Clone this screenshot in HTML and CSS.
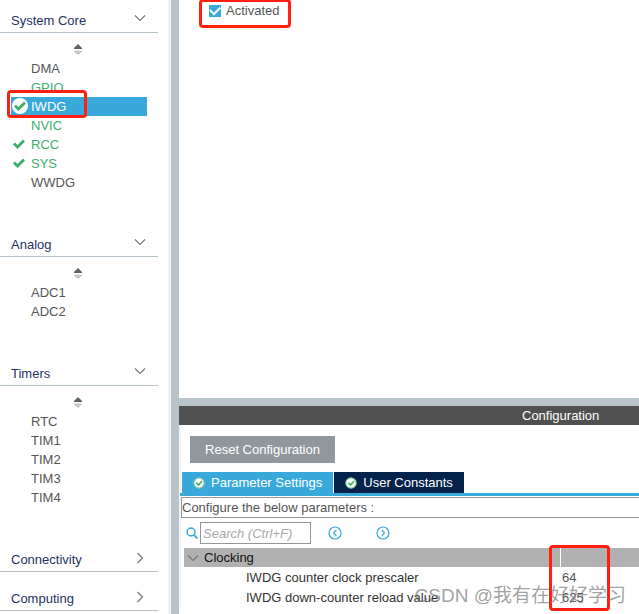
FILE: index.html
```html
<!DOCTYPE html>
<html lang="en">
<head>
<meta charset="utf-8">
<title>IWDG Mode and Configuration</title>
<link rel="stylesheet" href="styles.css">
</head>
<body>
<svg class="defs" aria-hidden="true">
  <symbol id="down" viewBox="0 0 12 8"><path d="M1 1.5 6 6.5 11 1.5" fill="none" stroke="#777" stroke-width="1.2"/></symbol>
  <symbol id="right" viewBox="0 0 8 12"><path d="M1.5 1 6.5 6 1.5 11" fill="none" stroke="#777" stroke-width="1.2"/></symbol>
  <symbol id="sort" viewBox="0 0 8 11"><path d="M4 0 8 4v1H0V4z" fill="#606060"/><path d="M0 6.5h8v1L4 11 0 7.500z" fill="#c8c8c8"/></symbol>
  <symbol id="tick" viewBox="0 0 14 12"><path d="M2 5.500 5.500 9 12 2.500" fill="none" stroke="#3fae6c" stroke-width="2.800"/></symbol>
  <symbol id="ok" viewBox="0 0 12 12"><circle cx="6" cy="6" r="5.200" fill="#fff" stroke="#7cc79a" stroke-width="1.200"/><path d="M3.300 5.700 5.500 8 9 4.200" fill="none" stroke="#3fae6c" stroke-width="1.600"/></symbol>
</svg>
<div class="app">
  <nav class="sidebar">
    <section>
      <button class="head first">System Core<svg class="down"><use href="#down"/></svg></button>
      <div class="sort"><svg><use href="#sort"/></svg></div>
      <ul>
        <li>DMA</li>
        <li class="green">GPIO</li>
        <li class="selected"><span class="disc"><svg class="tick"><use href="#tick"/></svg></span>IWDG<span class="mark mark-item"></span></li>
        <li class="green">NVIC</li>
        <li class="green"><svg class="tick"><use href="#tick"/></svg>RCC</li>
        <li class="green"><svg class="tick"><use href="#tick"/></svg>SYS</li>
        <li>WWDG</li>
      </ul>
    </section>
    <section>
      <button class="head">Analog<svg class="down"><use href="#down"/></svg></button>
      <div class="sort"><svg><use href="#sort"/></svg></div>
      <ul><li>ADC1</li><li>ADC2</li></ul>
    </section>
    <section>
      <button class="head">Timers<svg class="down"><use href="#down"/></svg></button>
      <div class="sort"><svg><use href="#sort"/></svg></div>
      <ul><li>RTC</li><li>TIM1</li><li>TIM2</li><li>TIM3</li><li>TIM4</li></ul>
    </section>
    <section><button class="head">Connectivity<svg class="right"><use href="#right"/></svg></button></section>
    <section><button class="head">Computing<svg class="right"><use href="#right"/></svg></button></section>
  </nav>
  <main>
    <div class="mode">
      <label><input type="checkbox" checked>Activated<span class="mark mark-mode"></span></label>
    </div>
    <h2>Configuration</h2>
    <div class="config">
      <button class="reset">Reset Configuration</button>
      <div class="tabs">
        <button class="tab active"><svg><use href="#ok"/></svg>Parameter Settings</button>
        <button class="tab"><svg><use href="#ok"/></svg>User Constants</button>
      </div>
      <p class="hint">Configure the below parameters :</p>
      <div class="search">
        <label for="q" aria-label="Search"><svg class="glass" viewBox="0 0 12 12"><circle cx="5" cy="5" r="4" fill="none" stroke="#39a9dc" stroke-width="1.500"/><path d="m8 8 3.500 3.500" stroke="#39a9dc" stroke-width="1.800"/></svg></label>
        <input id="q" type="text" placeholder="Search (Ctrl+F)">
        <button class="step" aria-label="Previous"><svg viewBox="0 0 14 14"><circle cx="7" cy="7" r="6"/><path d="M8.300 4 5.500 7l2.800 3"/></svg></button>
        <button class="step" aria-label="Next"><svg viewBox="0 0 14 14"><circle cx="7" cy="7" r="6"/><path d="M5.700 4 8.500 7l-2.800 3"/></svg></button>
      </div>
      <div class="params">
        <table>
          <thead><tr><th><svg class="down"><use href="#down"/></svg>Clocking</th><th></th></tr></thead>
          <tbody>
            <tr><td>IWDG counter clock prescaler</td><td>64</td></tr>
            <tr><td>IWDG down-counter reload value</td><td>625</td></tr>
          </tbody>
        </table>
        <span class="mark mark-values"></span>
      </div>
    </div>
  </main>
  <div class="watermark">CSDN @我有在好好学习</div>
</div>
</body>
</html>
```

FILE: styles.css
```css
* { box-sizing: border-box; }
body {
  margin: 0;
  background: #fff;
  color: #555;
  font: 13px/19px "Liberation Sans", "Noto Sans CJK SC", sans-serif;
}
button, input { font: inherit; border: 0; margin: 0; padding: 0; background: none; }
svg { display: block; flex: none; }
.defs { position: absolute; width: 0; height: 0; }
.app {
  position: relative;
  display: grid;
  grid-template-columns: 179px 1fr;
  min-height: 100vh;
  overflow: hidden;
}

.sidebar {
  border-right: 8px solid #b8c4ca;
  box-shadow: inset -3px 0 #f0f0f0;
  padding-right: 13px;
}
.head {
  display: flex;
  align-items: flex-end;
  justify-content: space-between;
  width: 100%;
  height: 39px;
  padding: 0 12px 2px 11px;
  border-bottom: 1px solid #b4c1c8;
  color: #26335f;
}
.head.first { height: 33px; }
.down { width: 12px; height: 8px; }
.right { width: 8px; height: 12px; }
.head .down { margin-bottom: 8px; }
.head .right { margin: 0 2px 5px 0; }
.sort { height: 26px; padding: 11px 0 0 74px; }
.sort svg { width: 8px; height: 11px; }
ul { list-style: none; margin: 0; padding: 0 11px 26px 11px; }
li {
  position: relative;
  height: 19px;
  padding-left: 20px;
}
.green { color: #3fae6c; }
.tick { width: 14px; height: 12px; }
li > .tick { position: absolute; left: 1px; top: 3px; }
.selected { background: #39a9dc; color: #fff; }
.disc {
  position: absolute;
  left: 1px;
  top: 1px;
  display: grid;
  place-items: center;
  width: 16px;
  height: 16px;
  border-radius: 50%;
  background: #fff;
}
.mark {
  position: absolute;
  border: 3px solid #ff1e0f;
  border-radius: 4px;
  pointer-events: none;
}
.mark-item { left: -4px; top: -7px; width: 80px; height: 28px; z-index: 1; }

main { display: flex; flex-direction: column; min-width: 0; }
.mode { display: flex; align-items: flex-start; height: 406px; padding: 1px 0 0 30px; border-bottom: 8px solid #b8c4ca; }
.mode label { position: relative; display: flex; align-items: center; gap: 5px; }
.mode input {
  appearance: none;
  width: 12px;
  height: 12px;
  background: #39a9dc;
  display: grid;
  place-items: center;
}
.mode input::after {
  content: "";
  width: 8px;
  height: 5px;
  border: solid #fff;
  border-width: 0 0 2px 2px;
  transform: translateY(-1px) rotate(-45deg);
}
.mark-mode { left: -10px; top: -2px; width: 92px; height: 29px; }
h2 {
  margin: 0;
  padding-left: 343px;
  background: #4f504f;
  color: #fff;
  font-size: 13px;
  font-weight: normal;
}
.config { padding: 11px 0 0 1px; box-shadow: inset 2px 0 #f4f4f4; }
.reset {
  display: block;
  margin: 0 0 9px 10px;
  width: 145px;
  height: 27px;
  background: #90979d;
  color: #fff;
}
.tabs { display: flex; gap: 1px; padding-left: 2px; border-bottom: 3px solid #39a9dc; }
.tab {
  display: flex;
  align-items: center;
  gap: 6px;
  height: 21px;
  padding: 0 11px;
  background: #03234b;
  color: #fff;
}
.tab.active { background: #39a9dc; }
.tab svg { width: 12px; height: 12px; }
.hint { margin: 1px 0 4px 1px; border: 1px solid #90979d; border-right: 0; }
.search { display: flex; align-items: center; height: 22px; padding-left: 6px; }
.glass { width: 12px; height: 12px; }
.search input {
  width: 111px;
  height: 22px;
  margin: 0 17px 0 2px;
  padding: 0 2px;
  border: 1px solid #90979d;
}
.search input::placeholder { color: #aaa; font-style: italic; opacity: 1; }
.step { margin-right: 34px; }
.step svg { width: 14px; height: 14px; fill: none; stroke: #39a9dc; stroke-width: 1.2; }
.params { position: relative; margin: 4px 0 0 4px; }
table { width: 100%; border-collapse: collapse; table-layout: fixed; color: #333; }
th, td { padding: 0; text-align: left; font-weight: normal; }
th { height: 19px; background: #b1b1b1; color: #111; }
th:first-child { width: 376px; }
th + th { border-left: 1px solid #fff; }
th .down { display: inline-block; margin: 0 5px 0 3px; }
td { height: 20px; padding-top: 1px; }
td:first-child { padding-left: 62px; }
td + td { padding-left: 2px; color: #555; }
.mark-values { left: 365px; top: -3px; width: 61px; height: 66px; }
.watermark {
  position: absolute;
  right: 13px;
  bottom: 4px;
  color: rgba(120, 120, 120, 0.7);
  font-size: 19px;
  line-height: 28px;
}
```
